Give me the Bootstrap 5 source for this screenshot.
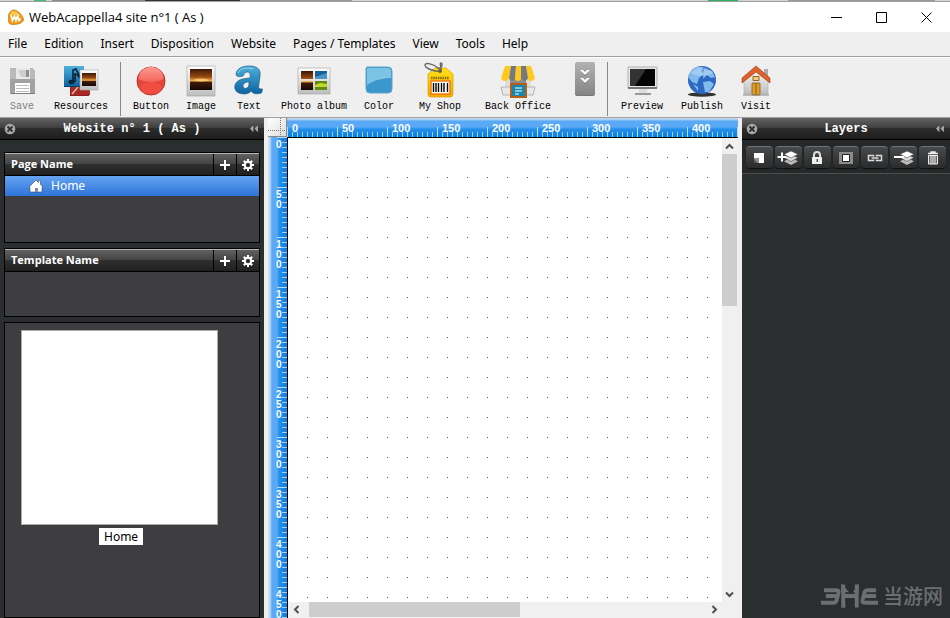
<!DOCTYPE html>
<html lang="en">
<head>
<meta charset="utf-8">
<meta name="viewport" content="width=device-width, initial-scale=1">
<title>WebAcappella4 site n°1 ( As )</title>
<link href="https://cdn.jsdelivr.net/npm/bootstrap@5.3.0/dist/css/bootstrap.min.css" rel="stylesheet">
<style>
body{font:12px/16px "Noto Sans","Open Sans",sans-serif;color:#000;background:#efefef}
button{border:0;padding:0;background:none;color:inherit;font:inherit}
svg{display:block}
.backdrop-strip{height:2px;background:linear-gradient(90deg,transparent 34px,#3cb878 34px 46px,transparent 46px 52px,#8a8a8a 52px 145px,#333 145px 240px,#999 240px 352px,transparent 352px 708px,#2fae5f 708px 738px,transparent 738px 788px,#999 788px 935px,transparent 935px),#d2d2d2;border-bottom:1px solid #a0a0a0}
.title-bar{height:30px;background:#fff;padding:0 1px 0 8px}
.title-bar .caption{margin-left:5px;font:13px/16px "Open Sans",sans-serif}
.win-btn{width:45px;height:30px}
.menu-bar{height:25px;border-bottom:1px solid #a0a0a0;padding:0 8px;gap:17px}
.menu-bar a{color:#000;text-decoration:none;line-height:24px}
.tool-bar{height:61px;border-top:1px solid #fff;border-bottom:1px solid #a0a0a0;padding:4px 6px 0;gap:16px}
.tool{min-width:32px;font:10px/12px "Liberation Mono",monospace;white-space:nowrap}
.tool svg{margin:0 auto 3px}
.tool:disabled{color:#808080}
.tool-wide{padding:0 1px}
.tool-sep{width:1px;height:54px;background:#8a8a8a;margin:0 -4px}
.more-btn{width:20px;height:34px;border-radius:2px;background:linear-gradient(#b2b2b2,#858585);border-bottom:1px solid #777}
.dock{background:#2b2e2f;color:#fff}
.dock-left{width:264px}
.dock-right{width:208px}
.dock-head{height:22px;padding:0 4px;background:linear-gradient(#636363,#3c3c3c 50%,#2c2c2c 50%,#1d1d1d);border-bottom:1px solid #000;font:bold 12px/20px "Liberation Mono",monospace}
.dock-stack{padding:12px 4px 0;gap:5px}
.tree-box{border:1px solid #000;background:#3e3e40}
.pages-box{height:91px}
.templates-box{height:69px}
.tree-head{height:23px;border-top:1px solid #b5b8b5;border-bottom:1px solid #000;background:linear-gradient(#606060,#434343 50%,#2f2f2f 50%,#202020);font:bold 11px/16px "Open Sans",sans-serif;padding-left:6px}
.tree-head button{width:23px;height:21px;border-left:1px solid #000}
.tree-head span{padding-bottom:2px}
.tree-row{height:20px;background:linear-gradient(#66a4f2,#2c74d8);color:#fff;padding-left:16px;text-decoration:none}
.tree-row:hover{color:#fff}
.thumb{width:197px;height:195px;background:#fff;border:1px solid #aaa;margin:7px 0 3px 16px}
.thumb-name{background:#fff;color:#000;line-height:17px;padding:0 5px;margin-left:94px}
.work{margin:0 4px;display:grid;grid-template:20px minmax(0,1fr) 16px / 20px minmax(0,1fr) 16px}
.corner{background:linear-gradient(135deg,#fff,#dcdcdc);border-right:1px solid #888;border-bottom:1px solid #888;margin:0 1px 1px 0}
.ruler{color:#fff;overflow:hidden;font:bold 10px/10px "Liberation Sans",Arial,sans-serif}
.ruler-x{grid-column:2/4;margin-left:-1px;border-bottom:1px solid #000;line-height:21px;
background:repeating-linear-gradient(90deg,#b5dcfb 0 1px,transparent 1px 50px) 0 9px/100% 10px no-repeat,repeating-linear-gradient(90deg,#9fd0f8 0 1px,transparent 1px 5px) 0 14px/100% 5px no-repeat,linear-gradient(#c9ddf0,#9cc8f0 2px,#59a9f6 3px 9px,#2590ea 11px,#0b7fe0)}
.ruler-x span{flex:0 0 50px;padding-left:5px;font-size:11px}
.ruler-y{grid-row:2/4;margin-top:-1px;border-right:1px solid #000;
background:repeating-linear-gradient(#b5dcfb 0 1px,transparent 1px 50px) 9px 0/10px 100% no-repeat,repeating-linear-gradient(#9fd0f8 0 1px,transparent 1px 5px) 14px 0/5px 100% no-repeat,linear-gradient(90deg,#dbe6f0,#bdd8f2 2px,#59a9f6 4px 9px,#2590ea 11px,#0b7fe0)}
.ruler-y span{flex:0 0 50px;width:7px;margin-left:8px;padding-top:3px;word-break:break-all}
.bar-track{background:#f0f0f0}
.bar-thumb{background:#cdcdcd}
.thumb-v{height:152px;margin-right:1px}
.thumb-h{width:211px;height:15px;margin-left:5px}
.bar-track button{flex:0 0 16px;width:15px;height:15px}
.layer-tools{padding:6px 4px 5px;gap:2px;border-bottom:1px solid #4c4f50;background:#262829}
.layer-tools button{width:27px;height:22px;border-radius:4px;border-top:1px solid #707273;background:linear-gradient(#48494b,#2a2b2d);box-shadow:0 1px 1px #111}
.layer-tools svg{margin:auto}
.brand-mark{color:#6c6e70;padding:0 7px 8px 0;font:18px/28px "Noto Sans CJK SC",sans-serif}
.brand-mark b{font-size:20px;font-weight:500}
</style>
<script src="https://cdn.jsdelivr.net/npm/bootstrap@5.3.0/dist/js/bootstrap.bundle.min.js"></script>
</head>
<body class="vh-100 d-flex flex-column overflow-hidden">

<svg width="0" height="0" class="position-absolute" aria-hidden="true">
<defs>
<linearGradient id="sunset" x2="0" y2="1"><stop stop-color="#3a1708"/><stop offset=".38" stop-color="#9a4a12"/><stop offset=".56" stop-color="#f4b04a"/><stop offset=".64" stop-color="#40190a"/><stop offset="1" stop-color="#150806"/></linearGradient>
<linearGradient id="frame" x2="0" y2="1"><stop stop-color="#fff"/><stop offset="1" stop-color="#bdbdbd"/></linearGradient>
<linearGradient id="blue" x2="0" y2="1"><stop stop-color="#4fb0dc"/><stop offset="1" stop-color="#0d62a0"/></linearGradient>
<linearGradient id="gold" x2="0" y2="1"><stop stop-color="#ffe21a"/><stop offset="1" stop-color="#f2a900"/></linearGradient>
<linearGradient id="red" x2="0" y2="1"><stop stop-color="#ff9a90"/><stop offset="1" stop-color="#f4655a"/></linearGradient>
<symbol id="gear" viewBox="0 0 14 14"><g stroke="#fff" stroke-width="2"><path d="M7 1v2.500M7 10.500V13M1 7h2.500M10.500 7H13M2.800 2.800l1.700 1.700M9.500 9.500l1.700 1.700M2.800 11.200l1.700-1.700M9.500 4.500l1.700-1.700"/><circle cx="7" cy="7" r="3.200" fill="none"/></g></symbol>
<symbol id="plus" viewBox="0 0 12 12"><path d="M6 1v10M1 6h10" stroke="#fff" stroke-width="2"/></symbol>
<symbol id="dock-close" viewBox="0 0 12 12"><circle cx="6" cy="6" r="5.300" fill="#a9a9a9"/><path d="M3.500 3.500l5 5M8.500 3.500l-5 5" stroke="#303030" stroke-width="1.800"/></symbol>
<symbol id="dock-fold" viewBox="0 0 12 12"><path d="M5 3L2.500 5.500 5 8.500zM9.500 3L7 5.500l2.500 3z" fill="#aaa" stroke="#aaa" stroke-width=".8"/></symbol>
<symbol id="sheets" viewBox="0 0 16 16"><path d="M8 8l7 3.200L8 15l-7-3.800z" fill="#bbb"/><path d="M8 4.500l7 3.200-7 3.800-7-3.800z" fill="#ddd" stroke="#444" stroke-width=".6"/><path d="M8 1l7 3.200L8 8 1 4.200z" fill="#fff" stroke="#444" stroke-width=".6"/></symbol>
</defs>
</svg>

<div class="backdrop-strip flex-shrink-0"></div>
<header class="title-bar d-flex align-items-center flex-shrink-0">
<svg width="16" height="16" viewBox="0 0 16 16"><path d="M5 1C9 0 16 7 15.500 11S5 16.500 2 15-1 2.500 5 1z" fill="#f29a12" stroke="#c77a18" stroke-width=".7"/><path d="M5 2c3 0 7 3 8 6-4-3-8-3-11-1 0-2 1-5 3-5z" fill="#ffc94c"/><path d="M3 6l1.500 5.500 2-4.500 1.500 4.500L9.500 7l1.500 4.500 1.500-2" fill="none" stroke="#fff" stroke-width="1.700"/></svg>
<span class="caption">WebAcappella4 site n°1 ( As )</span>
<div class="ms-auto d-flex">
<button class="win-btn d-grid" aria-label="Minimize"><svg class="m-auto" width="11" height="11"><path d="M0 5.500h11" stroke="#000"/></svg></button>
<button class="win-btn d-grid" aria-label="Maximize"><svg class="m-auto" width="11" height="11"><path d="M.5.500h10v10H.5z" fill="none" stroke="#000"/></svg></button>
<button class="win-btn d-grid" aria-label="Close"><svg class="m-auto" width="11" height="11"><path d="M.5.500l10 10M10.500.500l-10 10" stroke="#000"/></svg></button>
</div>
</header>

<nav class="menu-bar d-flex flex-shrink-0">
<a href="#">File</a><a href="#">Edition</a><a href="#">Insert</a><a href="#">Disposition</a><a href="#">Website</a><a href="#">Pages / Templates</a><a href="#">View</a><a href="#">Tools</a><a href="#">Help</a>
</nav>

<div class="tool-bar d-flex align-items-start flex-shrink-0">
<button class="tool" disabled><svg width="28" height="36" viewBox="0 0 28 36"><path d="M2 6h22l3 3v23H2z" fill="#a2a2a2"/><path d="M2 6h22l3 3v8H2z" fill="#b9b9b9"/><path d="M8 6h14v11H8z" fill="#e8e8e8"/><path d="M10 8h9v7h-6z" fill="#cfcfcf"/><path d="M18 8h3v7h-3z" fill="#8f8f8f"/><path d="M7 21h15v10H7z" fill="#fff"/><path d="M8 23.500h13M8 26.500h13M8 29.500h13" stroke="#bbb"/><path d="M3 31.500h24" stroke="#7d7d7d"/></svg>Save</button>
<button class="tool"><svg width="36" height="36" viewBox="0 0 36 36"><path d="M7 17l19 5v12H7z" fill="#8c1f1f"/><path d="M8 24h19v9H8z" fill="#a82a27"/><path d="M9 32l6-7" stroke="#e9b0a8" stroke-width="1.500"/><path d="M1 4h20v20H1z" fill="url(#blue)"/><path d="M10 20V8l3-1c1 4 4 4 3 8-1-2-2-3-4-3v8" fill="none" stroke="#082338" stroke-width="1.600"/><ellipse cx="8.500" cy="20" rx="3" ry="2.200" fill="#082338"/><path d="M17 8h18v20H17z" fill="url(#frame)" stroke="#aaa" stroke-width=".6"/><path d="M19 11h14v13H19z" fill="url(#sunset)"/><path d="M1 24.500h16" stroke="#093e66"/></svg>Resources</button>
<span class="tool-sep"></span>
<button class="tool"><svg width="30" height="36" viewBox="0 0 30 36"><circle cx="15" cy="19" r="14" fill="#e4443a" stroke="#b4372f"/><ellipse cx="15" cy="26" rx="11" ry="6" fill="#f04e42"/><path d="M2.500 17a12.500 12 0 0 1 25 0c-6 4-19 4-25 0z" fill="url(#red)"/></svg>Button</button>
<button class="tool"><svg width="30" height="36" viewBox="0 0 30 36"><path d="M1 4h28v30H1z" fill="url(#frame)" stroke="#aaa" stroke-width=".7"/><path d="M4 7h22v21H4z" fill="url(#sunset)"/><ellipse cx="15" cy="18" rx="7" ry="1.500" fill="#ffd98a" opacity=".7"/></svg>Image</button>
<button class="tool"><svg width="30" height="36" viewBox="0 0 30 36"><path d="M2 12C3 6 9 4 15 4c8 0 12 3 11 10l-1.500 11c0 2 2 2 4 2l-1 4c-5 1.500-9 1-10-2-3 3-7 3.500-11 2.500C0 30 0 24 2 21c3-4 8-4.500 14-5 1-5-1-6-3-6-3 0-3 3-4 4C6 15 2 15 2 12zm13 8c-4 0-6 2-6 4s2 3 4 2 2-3 2-6z" fill="url(#blue)" stroke="#175e8c" stroke-width=".7"/><path d="M4 11c2-5 10-6 15-4" stroke="#92d6f0" fill="none"/></svg>Text</button>
<button class="tool"><svg width="34" height="36" viewBox="0 0 34 36"><path d="M1 6h32v26H1z" fill="url(#frame)" stroke="#aaa" stroke-width=".7"/><path d="M4 9h12v8H4zM4 19h12v9H4z" fill="url(#sunset)"/><path d="M18 9h12v8H18z" fill="#17609e"/><path d="M18 15l12-4v6H18z" fill="#4b94c6"/><path d="M18 19h12v9H18z" fill="#628a12"/><path d="M18 23l5-2 7 1v3H18z" fill="#c4d72c"/></svg>Photo album</button>
<button class="tool me-2"><svg width="30" height="36" viewBox="0 0 30 36"><path d="M3 5h21q4 0 4 4v18q0 4-4 4H6q-4 0-4-4V6z" fill="#3b97cc" stroke="#5da5cc"/><path d="M3 6h21q3 0 3 3v7c-8 0-17 2-24 7z" fill="#7dc3e6"/></svg>Color</button>
<button class="tool me-2"><svg width="32" height="36" viewBox="0 0 32 36"><path d="M11 6h11l7 6v20q0 3-3 3H7q-3 0-3-3V12z" fill="url(#gold)" stroke="#d9a514" stroke-width=".8"/><circle cx="16" cy="9" r="2" fill="#6b5b22"/><path d="M16 9C10 10 1 6 1 3s9-1 13 3c2 2 6-4 3-5-2 0 1 6 0 8" fill="none" stroke="#666" stroke-width="1.400"/><path d="M7 19h19v13H7z" fill="#fff" stroke="#f07a10" stroke-width="1.500"/><path d="M9.500 21v9M12 21v9M14.500 21v9M17.500 21v9M20 21v9M23.500 21v9" stroke="#000" stroke-width="1.400"/><path d="M7 16h18" stroke="#8b6b12" stroke-width="2.500" stroke-dasharray="1.500 .8"/></svg>My Shop</button>
<button class="tool me-2"><svg width="36" height="36" viewBox="0 0 36 36"><path d="M5 16h26v9H5z" fill="#ddd"/><path d="M10 16h16v9H10z" fill="#8d8d8d"/><path d="M5 4h6l-2 12q-1 3-4 3t-4-3zM16 4h5v12q0 3-3 3t-3-3zM26 4h5l4 12q-1 3-4 3t-3-3z" fill="#ffc81c"/><path d="M11 4h5l-1 12q-1 3-3 3t-3-3zM21 4h5l2 12q-1 3-3 3t-4-3z" fill="#76797c"/><path d="M1 25h34l-2 8H3z" fill="#e8e8e8" stroke="#b5b5b5"/><path d="M11 22h15v13H11z" fill="#1686ae" stroke="#b85d16" stroke-width="2"/><path d="M15 26h7M15 29h7M15 32h4" stroke="#fff"/></svg>Back Office</button>
<button class="more-btn" aria-label="More tools"><svg width="20" height="34"><path d="M6 14h8l-4 5zM6 22h8l-4 5z" transform="translate(0 -5)" fill="#666"/><path d="M5 8h10l-5 5zM5 16h10l-5 5z" fill="#fff"/><path d="M8 8h4l-2 2zM8 16h4l-2 2z" fill="#999"/></svg></button>
<span class="tool-sep"></span>
<button class="tool tool-wide"><svg width="32" height="36" viewBox="0 0 32 36"><path d="M2 5h29v21H2z" fill="#e6e6e6" stroke="#999" stroke-width=".7"/><path d="M4 7h25v17H4z" fill="#050505"/><path d="M4 7h16L9 24H4z" fill="#333"/><path d="M2 25h29v2H2z" fill="#777"/><path d="M13 27h8v4h-8z" fill="#ddd"/><path d="M9 31h16v2H9z" fill="#999"/></svg>Preview</button>
<button class="tool tool-wide"><svg width="32" height="36" viewBox="0 0 32 36"><ellipse cx="16" cy="32.500" rx="14" ry="2.200" fill="#333"/><circle cx="16" cy="18" r="14" fill="#2d68c0"/><path d="M5 9c5-6 9-4 12-4l-2 4 3 3-5 4-2 6-5-2-4-5zM18 7l8 2 3 6-4 1-4-3-4 4zM17 20l7-1 4 3-5 8h-4zM7 22l5 3v4z" fill="#82b9ee"/><path d="M5 11a13 12 0 0 1 22 0c-8 4-15 4-22 0z" fill="#c6e2fb" opacity=".45"/></svg>Publish</button>
<button class="tool"><svg width="30" height="36" viewBox="0 0 30 36"><path d="M23 7h4v9h-4z" fill="#aaa"/><path d="M3 17L15 6l12 11v15H3z" fill="url(#frame)" stroke="#b4b4b4" stroke-width=".7"/><path d="M1 16L15 4l14 12v5L15 10 1 21z" fill="#df6129" stroke="#9c3511" stroke-width=".6"/><path d="M11 21h8v12h-8z" fill="#dc9e2a" stroke="#8a5c10" stroke-width=".8"/><path d="M15 21v12" stroke="#8a5c10"/><path d="M12 14.500h6v4h-6z" fill="#f2cf78" stroke="#93631e"/><path d="M2 33h26" stroke="#888"/></svg>Visit</button>
</div>

<main class="d-flex flex-grow-1 overflow-hidden">
<aside class="dock dock-left d-flex flex-column flex-shrink-0">
<div class="dock-head d-flex align-items-center justify-content-between"><button aria-label="Close panel"><svg width="12" height="12"><use href="#dock-close"/></svg></button><span>Website n° 1 ( As )</span><button aria-label="Fold panel"><svg width="12" height="12"><use href="#dock-fold"/></svg></button></div>
<div class="dock-stack d-flex flex-column flex-grow-1">
<section class="tree-box pages-box">
<div class="tree-head d-flex align-items-center"><span class="me-auto">Page Name</span><button class="d-grid" aria-label="Add page"><svg class="m-auto" width="12" height="12"><use href="#plus"/></svg></button><button class="d-grid" aria-label="Page settings"><svg class="m-auto" width="14" height="14"><use href="#gear"/></svg></button></div>
<a class="tree-row d-flex align-items-center" href="#"><svg class="ms-2 me-2" width="14" height="14" viewBox="0 0 14 14"><path d="M0 8l7-7 2.500 2.500V1.500h2v4L14 8l-1 .5V13H1V8.500z" fill="#fff" stroke="#3a4a5c" stroke-width=".6"/><path d="M6 9h3v4H6z" fill="#7d8fa5"/></svg><span>Home</span></a>
</section>
<section class="tree-box templates-box">
<div class="tree-head d-flex align-items-center"><span class="me-auto">Template Name</span><button class="d-grid" aria-label="Add template"><svg class="m-auto" width="12" height="12"><use href="#plus"/></svg></button><button class="d-grid" aria-label="Template settings"><svg class="m-auto" width="14" height="14"><use href="#gear"/></svg></button></div>
</section>
<section class="tree-box flex-grow-1 d-flex flex-column align-items-start"><div class="thumb"></div><span class="thumb-name">Home</span></section>
</div>
</aside>

<section class="work flex-grow-1">
<div class="corner"><svg width="18" height="18"><path d="M0 12.500h18M12.500 0v18" stroke="#777" stroke-dasharray="1 1"/></svg></div>
<div class="ruler ruler-x d-flex"><span>0</span><span>50</span><span>100</span><span>150</span><span>200</span><span>250</span><span>300</span><span>350</span><span>400</span></div>
<div class="ruler ruler-y d-flex flex-column"><span>0</span><span>50</span><span>100</span><span>150</span><span>200</span><span>250</span><span>300</span><span>350</span><span>400</span><span>450</span></div>
<div class="bg-white overflow-hidden"><svg width="100%" height="100%"><defs><pattern id="dots" width="20" height="20" patternUnits="userSpaceOnUse"><rect x="19" y="19" width="1" height="1" fill="#555"/></pattern></defs><rect width="100%" height="100%" fill="url(#dots)"/></svg></div>
<div class="bar-track d-flex flex-column"><button class="d-grid" aria-label="Scroll up"><svg class="m-auto" width="9" height="7"><path d="M1 5.500L4.500 2 8 5.500" fill="none" stroke="#505050" stroke-width="2"/></svg></button><div class="bar-thumb thumb-v"></div><button class="d-grid mt-auto" aria-label="Scroll down"><svg class="m-auto" width="9" height="7"><path d="M1 1.500L4.500 5 8 1.500" fill="none" stroke="#505050" stroke-width="2"/></svg></button></div>
<div class="bar-track d-flex"><button class="d-grid" aria-label="Scroll left"><svg class="m-auto" width="7" height="9"><path d="M5.500 1L2 4.500 5.500 8" fill="none" stroke="#505050" stroke-width="2"/></svg></button><div class="bar-thumb thumb-h"></div><button class="d-grid ms-auto" aria-label="Scroll right"><svg class="m-auto" width="7" height="9"><path d="M1.500 1L5 4.500 1.500 8" fill="none" stroke="#505050" stroke-width="2"/></svg></button></div>
<div class="bar-track"></div>
</section>

<aside class="dock dock-right d-flex flex-column flex-shrink-0">
<div class="dock-head d-flex align-items-center justify-content-between"><button aria-label="Close panel"><svg width="12" height="12"><use href="#dock-close"/></svg></button><span>Layers</span><button aria-label="Fold panel"><svg width="12" height="12"><use href="#dock-fold"/></svg></button></div>
<div class="layer-tools d-flex">
<button aria-label="New layer"><svg width="12" height="12"><path d="M1 1h10v10H1z" fill="#fff"/><path d="M1 6h5v5H1z" fill="#8f8f8f"/><path d="M1 7v4h4z" fill="#555"/></svg></button>
<button aria-label="Add to layer"><svg width="22" height="16"><use href="#sheets" x="6" width="16" height="16"/><path d="M5 2.500v9M.5 7h9" stroke="#fff" stroke-width="2"/></svg></button>
<button aria-label="Lock layer"><svg width="12" height="14"><path d="M3 7V4a3 3 0 0 1 6 0v3" fill="none" stroke="#ddd" stroke-width="2"/><path d="M1 6h10v7H1z" fill="#eee"/><path d="M5.500 8h1.500v3H5.500z" fill="#555"/></svg></button>
<button aria-label="Layer frame"><svg width="14" height="12"><path d="M0 0h14v12H0z" fill="#8b8b8b"/><path d="M3.500 2.500h7v7h-7z" fill="#fff" stroke="#222"/></svg></button>
<button aria-label="Link layers"><svg width="16" height="8"><path d="M6.500 2.500v-1h-5v5h5v-1M9.500 2.500v-1h5v5h-5v-1M4.500 4h7" fill="none" stroke="#ddd" stroke-width="1.500"/></svg></button>
<button aria-label="Remove from layer"><svg width="22" height="16"><use href="#sheets" x="6" width="16" height="16"/><path d="M1 7h10" stroke="#fff" stroke-width="2"/></svg></button>
<button aria-label="Delete layer"><svg width="12" height="14"><path d="M4 2V1h4v1M1 2.500h10" fill="none" stroke="#eee" stroke-width="1.500"/><path d="M1.500 4.500h9V13h-9z" fill="#666" stroke="#eee"/><path d="M4 5v8M6 5v8M8 5v8" stroke="#eee"/></svg></button>
</div>
<div class="brand-mark mt-auto d-flex align-items-center justify-content-end gap-1">
<svg width="58" height="26" viewBox="0 0 60 26"><g fill="none" stroke="currentColor" stroke-width="4"><path d="M3 7h13q3 0 2 3l-2 8q-1 2-3 2H0M5 13h12M59 20H45q-3 0-2-3l2-8q1-2 3-2h9M43 13h14"/><path d="M23 1v24M37 1v24M23 13h14"/></g><path d="M21 0l8 9h-8zM39 0l-6 9h6zM21 25l4-5v5z" fill="currentColor"/></svg>
<b>当游网</b>
</div>
</aside>
</main>
</body>
</html>
